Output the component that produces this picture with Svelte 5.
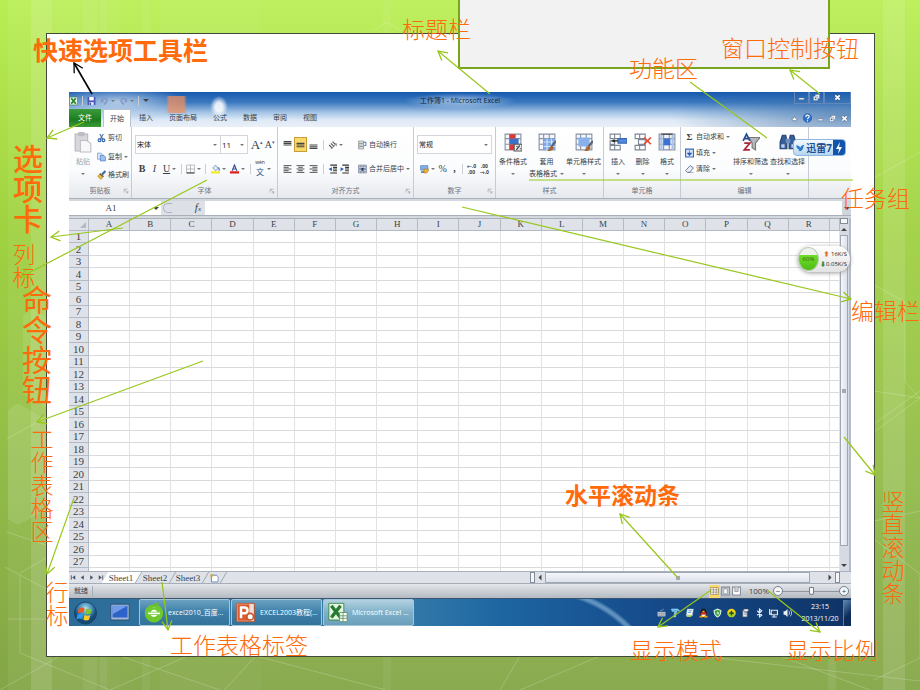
<script lang="ts">
    const columns = 'ABCDEFGHIJKLMNOPQR'.split('');
    const rows = Array.from({ length: 28 }, (_, i) => i + 1);
    const tabs = ['开始', '插入', '页面布局', '公式', '数据', '审阅', '视图'];
    const sheets = ['Sheet1', 'Sheet2', 'Sheet3'];

    let activeTab = $state('开始');
    let activeSheet = $state('Sheet1');
    let zoom = $state(50);

    // positions are on a 920 wide slide
    const labels = [
        { text: '快速选项工具栏', x: 33, y: 36, kind: 'title' },
        { text: '标题栏', x: 402, y: 16, kind: 'thin' },
        { text: '功能区', x: 629, y: 55, kind: 'thin' },
        { text: '窗口控制按钮', x: 721, y: 35, kind: 'thin' },
        { text: '任务组', x: 841, y: 185, kind: 'thin' },
        { text: '编辑栏', x: 851, y: 298, kind: 'thin' },
        { text: '水平滚动条', x: 565, y: 482, kind: 'bold' },
        { text: '工作表格标签', x: 170, y: 632, kind: 'thin' },
        { text: '显示模式', x: 630, y: 637, kind: 'thin' },
        { text: '显示比例', x: 786, y: 637, kind: 'thin' },
        { text: '选项卡', x: 13, y: 144, kind: 'tall heavy' },
        { text: '列标', x: 12, y: 243, kind: 'tall thin' },
        { text: '命令按钮', x: 22, y: 285, kind: 'tall large' },
        { text: '工作表格区', x: 30, y: 428, kind: 'tall thin' },
        { text: '行标', x: 45, y: 581, kind: 'tall thin' },
        { text: '竖直滚动条', x: 881, y: 490, kind: 'tall thin' }
    ];

    const arrows = [
        [490, 94, 438, 51],
        [820, 94, 790, 70],
        [84, 122, 47, 138],
        [123, 228, 51, 237],
        [207, 180, 21, 277],
        [462, 207, 851, 299],
        [203, 361, 37, 422],
        [74, 498, 47, 574],
        [162, 582, 168, 630],
        [677, 577, 620, 514],
        [711, 590, 658, 627],
        [767, 590, 820, 632],
        [844, 437, 875, 475]
    ];

    const gridLines = '<path d="M1 1h14v14H1zM1 5h14M1 10h14M5 1v14M10 1v14" fill="#f4f7fb" stroke="#8a93a3"/>';
    const brush = '<path d="M16 7l-4 5" stroke="#5b6675" stroke-width="2"/><path d="M12 11l2 2c-1 3-4 3-6 3 2-1 2-4 4-5z" fill="#a9652b"/>';

    const icons: Record<string, string> = {
        excel: '<path d="M1 1h14v14H1z" fill="#e9f5e8" stroke="#2d8638"/><path d="M4 3l8 10M12 3L4 13" stroke="#23802e" stroke-width="3"/>',
        save: '<path d="M1 1h14v14H1z" fill="#4a55b5"/><path d="M4 1h8v6H4z" fill="#fff"/><path d="M4 10h8v5H4z" fill="#dfe4fa"/><path d="M5 11h2v4H5z" fill="#313b8f"/>',
        undo: '<path d="M3 7c2-6 11-4 9 2-1 3-3 4-5 5" fill="none" stroke="#8299c4" stroke-width="3"/><path d="M1 4l1 7 6-2z" fill="#8299c4"/>',
        redo: '<path d="M13 7C11 1 2 3 4 9c1 3 3 4 5 5" fill="none" stroke="#8299c4" stroke-width="3"/><path d="M15 4l-1 7-6-2z" fill="#8299c4"/>',
        min: '<path d="M2 9h12v4H2z" fill="#fff" stroke="#48618a"/>',
        restore: '<path d="M5 1h10v10H5z" fill="#fff" stroke="#48618a"/><path d="M1 5h10v10H1z" fill="#fff" stroke="#48618a"/><path d="M4 8h4v4H4z" fill="#48618a"/>',
        close: '<path d="M3 3l10 10M13 3L3 13" stroke="#3c5073" stroke-width="6"/><path d="M3 3l10 10M13 3L3 13" stroke="#fff" stroke-width="4"/>',
        up: '<path d="M2 11l6-7 6 7-3 2H5z" fill="#fff" stroke="#50617c" stroke-width="1.5"/>',
        help: '<circle cx="8" cy="8" r="7.5" fill="#2f6fc7" stroke="#1d4f99"/><path d="M5 6c0-4 6-4 6-.5 0 2-3 2-3 4.500M8 12v2" fill="none" stroke="#fff" stroke-width="2"/>',
        paste: '<path d="M1 3h12v16H1z" fill="#d8d8dc" stroke="#b5b5bb"/><path d="M4 1h6v4H4z" fill="#bcbcc2"/><path d="M6 9h6l4 3v8H6z" fill="#f7f7f9" stroke="#bdbdc4"/>',
        cut: '<path d="M5 1l5 9M11 1L6 10" stroke="#53759f" stroke-width="2"/><circle cx="4.500" cy="12" r="2.500" fill="none" stroke="#2b5fa8" stroke-width="2"/><circle cx="11.500" cy="12" r="2.500" fill="none" stroke="#2b5fa8" stroke-width="2"/>',
        copy: '<path d="M1 1h6l3 3v8H1z" fill="#dbe9fa" stroke="#4e7fc0"/><path d="M6 5h6l3 3v7H6z" fill="#9cc3f0" stroke="#3369b3"/>',
        painter: '<path d="M15 1L9 7" stroke="#3d69ab" stroke-width="4"/><path d="M6 5l6 5-5 6-6-6z" fill="#e8b838" stroke="#a67a1c"/><path d="M5 6l6 5" stroke="#555" stroke-width="2"/>',
        borders: '<path d="M1 1h14v14H1zM8 1v14M1 8h14" fill="none" stroke="#8b8f96"/><path d="M1 15h14" stroke="#444" stroke-width="2"/>',
        fill: '<path d="M3 6l5-5 5 6-5 4z" fill="#e1e8f2" stroke="#4a6080"/><path d="M13 5c2 2 2 4 1 6" stroke="#2d6fc9" stroke-width="2" fill="none"/><path d="M0 12h16v4H0z" fill="#f6ec1a"/>',
        color: '<path d="M4 11L8 1l4 10M5 8h6" stroke="#3b5593" stroke-width="2.200" fill="none"/><path d="M0 12h16v4H0z" fill="#e01d1d"/>',
        top: '<path d="M1 2h14M1 5h14M1 8h14" stroke="#444" stroke-width="2"/>',
        middle: '<path d="M1 5h14M1 8h14M1 11h14" stroke="#444" stroke-width="2"/>',
        bottom: '<path d="M1 8h14M1 11h14M1 14h14" stroke="#444" stroke-width="2"/>',
        left: '<path d="M1 2h14M1 5h9M1 8h14M1 11h9M1 14h14" stroke="#444" stroke-width="1.600"/>',
        center: '<path d="M1 2h14M4 5h8M1 8h14M4 11h8M1 14h14" stroke="#444" stroke-width="1.600"/>',
        right: '<path d="M1 2h14M6 5h9M1 8h14M6 11h9M1 14h14" stroke="#444" stroke-width="1.600"/>',
        orient: '<path d="M2 8l6 6M5 5l6 6M8 2l5 5" stroke="#555" stroke-width="2"/><path d="M5 15L15 6M15 10V6h-4" stroke="#555" fill="none"/>',
        outdent: '<path d="M4 1h12M9 5h7M9 8h7M9 11h7M4 15h12" stroke="#333" stroke-width="2"/><path d="M7 5v7L1 8z" fill="#2e62b1"/>',
        indent: '<path d="M4 1h12M9 5h7M9 8h7M9 11h7M4 15h12" stroke="#333" stroke-width="2"/><path d="M1 5v7l6-4z" fill="#2e62b1"/>',
        wrap: '<path d="M1 1h9v4H1zM1 6h9v4H1zM1 11h9v4H1z" fill="#e6e9ee" stroke="#666"/><path d="M10 3h4v6h-3" stroke="#2e62b1" stroke-width="1.500" fill="none"/>',
        merge: '<path d="M1 1h14v14H1z" fill="#cfdff5" stroke="#667"/><path d="M5 1v3M10 1v3M5 12v3M10 12v3M1 4h14M1 12h14" stroke="#667"/><path d="M2 8h4M14 8h-4" stroke="#1f57a8" stroke-width="2"/><path d="M6 6h4v5H6z" fill="#333"/>',
        money: '<path d="M1 2h13v8H1z" fill="#7fb1e8" stroke="#3c6ca8"/><path d="M7 8h8v3l-3 4H7z" fill="#e9b53c" stroke="#9a701b"/><path d="M2 12h5v3H2z" fill="#5675ad"/>',
        conditional: gridLines + '<path d="M5 1h5v4H5zM5 10h5v5H5z" fill="#d93a36"/><path d="M5 5h8v5H5z" fill="#3d70c9"/><path d="M9 10h7v6H9z" fill="#eee" stroke="#555"/><path d="M11 15l3-4M11 12h1M14 14h1" stroke="#333"/>',
        format: gridLines + '<path d="M5 5h10v10H5z" fill="#7ba7e8"/><path d="M5 8h10M5 12h10M8 5v10M12 5v10" stroke="#d5e3f8"/>' + brush,
        cellstyle: gridLines + '<path d="M3 4h10v8H3z" fill="#88b0ea"/>' + brush,
        insert: '<path d="M1 1h9v4H1zM5 1v4M1 11h9v4H1zM5 11v4M1 7h4v3H1z" fill="#fff" stroke="#7d8796"/><path d="M8 5h8v4H8z" fill="#5589dc" stroke="#3467b4"/><path d="M8 7H4M5 6L3 7l2 1" fill="none" stroke="#222"/>',
        remove: '<path d="M1 1h9v4H1zM5 1v4M1 11h9v4H1zM5 11v4M4 6h6v4H4z" fill="#fff" stroke="#7d8796"/><path d="M9 4l6 6M15 4l-6 6" stroke="#e4482e" stroke-width="1.500"/>',
        size: gridLines + '<path d="M5 5h6v6H5z" fill="#3c72d4"/><path d="M3 1v14M13 1v14" stroke="#a9c2e8" stroke-width="2"/><path d="M3 1h10" stroke="#333"/>',
        down: '<path d="M1 1h14v14H1z" fill="#d5e4f8" stroke="#3a6dbb" stroke-width="2"/><path d="M8 3v7M4 8l4 5 4-5z" fill="#235bb3" stroke="#235bb3" stroke-width="1"/>',
        eraser: '<path d="M1 11l8-9 6 4-7 8H4z" fill="#eef1f8" stroke="#586a92" stroke-width="1.500"/><path d="M5 14h10" stroke="#586a92"/>',
        sort: '<path d="M6 4h10l-4 5v6l-3-2V9z" fill="#b4b7bd" stroke="#777"/><path d="M1 7l3-6 3 6M2 5h4" fill="none" stroke="#244b94" stroke-width="1.500"/><path d="M2 9h5l-5 6h5" fill="none" stroke="#a8263a" stroke-width="1.500"/>',
        find: '<path d="M3 2h3l1 5v7H1V8zM10 2h3l2 6v6H9V7z" fill="#385e97" stroke="#213f70"/><path d="M6 5h4v4H6z" fill="#6d90c4"/><path d="M2 10h3v3H2zM11 10h3v3h-3z" fill="#b6cdf0"/>',
        launcher: '<path d="M3 12V3h9M6 6l6 6M13 8v5H8" fill="none" stroke="#8a8f97" stroke-width="1.500"/>',
        bird: '<path d="M0 3c4 0 6 2 8 4 1-4 4-4 7-5-1 2-2 3-2 5-1 5-5 8-9 6 1 0 2-1 2-2-3-1-5-4-6-8z" fill="#2b7bc8"/>',
        first: '<path d="M3 3v10" stroke="#4c5360" stroke-width="2"/><path d="M12 3v10L5 8z" fill="#4c5360"/>',
        prev: '<path d="M11 3v10L4 8z" fill="#4c5360"/>',
        next: '<path d="M5 3v10l7-5z" fill="#4c5360"/>',
        last: '<path d="M13 3v10" stroke="#4c5360" stroke-width="2"/><path d="M4 3v10l7-5z" fill="#4c5360"/>',
        newsheet: '<path d="M3 3h9l3 3v9H3z" fill="#fff" stroke="#5574ad" stroke-width="1.500"/><path d="M3 0v8M0 4h7M1 1l5 6M6 1L1 7" stroke="#e3a021"/>',
        normal: '<path d="M1 2h14v12H1zM1 6h14M1 10h14M6 2v12M11 2v12" fill="#fff" stroke="#776b45"/>',
        layout: '<path d="M1 1h14v14H1z" fill="#ccd0d6" stroke="#8b9098" stroke-width="2"/><path d="M5 4h6v9H5z" fill="#fff" stroke="#70757d"/>',
        breaks: '<path d="M1 1h14v14H1z" fill="#fff" stroke="#8b9098" stroke-width="2"/><path d="M5 1v8h6V1" fill="#ccd0d6" stroke="#70757d"/>',
        start: '<circle cx="12" cy="12" r="11.500" fill="url(#orb)" stroke="#1b4467"/><path d="M5 7c2-1 4-1 6 0l-1 5c-2-1-4-1-6 0z" fill="#ea5a24"/><path d="M12.500 7.500c2 1 4 1 6.500 0l-1.500 5c-2 1-4 1-6 0z" fill="#83c531"/><path d="M3.600 13.500c2-1 4-1 6 0l-1 5c-2-1-4-1-6 0z" fill="#2f9be8"/><path d="M11 14c2 1 4 1 6 0l-1.300 5c-2 1-4 1-6 0z" fill="#fbca25"/>',
        desktop: '<path d="M1 2h22v19H1z" fill="#9eb7d5" stroke="#24476e"/><path d="M3 4h18v14H3z" fill="#2c62c9"/><path d="M3 4h18L3 14z" fill="#729be7"/>',
        browser: '<circle cx="12" cy="13" r="9" fill="#fff" stroke="#6cc82c" stroke-width="4"/><path d="M12 6a7 7 0 0 1 7 6H5a7 7 0 0 1 7-6zM5 14h14a7 7 0 0 1-14 0z" fill="#6cc82c"/><path d="M8 11c2-3 6-3 8 0zM8 15h8c-2 3-6 3-8 0z" fill="#fff"/><path d="M10 4c2-4 6-4 8-3-1 3-4 4-8 3z" fill="#69bd2b"/>',
        ppt: '<path d="M1 1h21v22H1z" fill="#f1ddd2" stroke="#b9441b"/><path d="M2 2h14v20H2z" fill="#dc5a2b"/><path d="M6 19V6h4c5 0 5 7 0 7H6" fill="none" stroke="#fff" stroke-width="3"/><circle cx="17" cy="17" r="4" fill="#fff" stroke="#c7542a" stroke-width="2"/>',
        sheet: '<path d="M1 1h18v20H1z" fill="#e6f4e2" stroke="#2e8238"/><path d="M4 4l11 14M15 4L4 18" stroke="#267b31" stroke-width="4"/><path d="M14 12h9v11h-9zM14 16h9M14 19h9M18 12v11" fill="#fff" stroke="#54925b"/>',
        keyboard: '<path d="M1 6h14v8H1z" fill="#c6cbd2"/><path d="M2 9h12M2 12h12M4 6v8M8 6v8M12 6v8" stroke="#8d949e"/><path d="M6 5c0-3 4-1 6-4" stroke="#c6cbd2" fill="none"/>',
        bars: '<path d="M1 1h11l3 3h-5l-2 11H5L7 5H2z" fill="#42b9ef" stroke="#d9f2ff"/>',
        notes: '<path d="M4 1h11l-2 12H2z" fill="#f6fafd" stroke="#86a7ba"/><path d="M6 4h6M5 7h6" stroke="#4b8fc5" stroke-width="1.500"/><path d="M3 11h8v4H3z" fill="#b5d16c"/>',
        penguin: '<ellipse cx="8" cy="9" rx="6" ry="6.500" fill="#17181a"/><circle cx="8" cy="4" r="4" fill="#17181a"/><ellipse cx="8" cy="11" rx="4" ry="4" fill="#fff"/><path d="M3 7h10v4H3z" fill="#dc2a20"/><path d="M6 4h4v2H6zM1 13h6v3H1zM9 13h6v3H9z" fill="#f3a61c"/>',
        shield: '<path d="M8 0l7 3c0 7-2 10-7 13C3 13 1 10 1 3z" fill="#e5f6e1"/><path d="M8 2l5 2c0 5-1 7-5 10-4-3-5-5-5-10z" fill="#3fa048"/><path d="M9 4L6 9h3l-1 4 3-6H8z" fill="#fff"/>',
        plus: '<circle cx="8" cy="8" r="7.500" fill="#f4d619"/><path d="M1 10c4-4 9-3 14 0-2 7-12 7-14 0z" fill="#9ccc2e"/><path d="M8 4v8M4 8h8" stroke="#174e25" stroke-width="2.500"/>',
        usb: '<path d="M3 3h8v12H3z" fill="#e3e6ea" stroke="#4a5460"/><path d="M5 1h8v4H5zM6 7h5M6 10h4" fill="#fff" stroke="#4a5460"/>',
        bluetooth: '<path d="M4 4l8 8-4 3V1l4 3-8 8" fill="none" stroke="#e6f0fa" stroke-width="2"/>',
        network: '<path d="M4 3h11v8H4z" fill="#25466e" stroke="#e1e8f0" stroke-width="2"/><path d="M1 1v9h4M9 11v3M5 15h9" fill="none" stroke="#e1e8f0" stroke-width="2"/>',
        sound: '<path d="M1 5h3l4-4v14l-4-4H1z" fill="#eef3f8"/><path d="M10 4c2 2 2 6 0 8M13 2c3 4 3 8 0 12" fill="none" stroke="#cfdbe8" stroke-width="1.500"/>'
    };

    const movers = [
        { name: 'first', label: '第一张' },
        { name: 'prev', label: '上一张' },
        { name: 'next', label: '下一张' },
        { name: 'last', label: '最后一张' }
    ];
    const tray = ['keyboard', 'bars', 'notes', 'penguin', 'shield', 'plus', 'usb', 'bluetooth', 'network', 'sound'];
</script>

{#snippet icon(name: string, size = 'sm', box = '0 0 16 16')}
    <svg class={size} viewBox={box} aria-hidden="true">{@html icons[name]}</svg>
{/snippet}

{#snippet big(name: string, text: string, second = '')}
    <button class="big">
        {@render icon(name, 'lg')}
        <span>{text}</span>
        <span class="second">{second}<i class="caret"></i></span>
    </button>
{/snippet}

{#snippet tool(name: string, label: string, caret = false)}
    <button class="tool" aria-label={label}>
        {@render icon(name)}
        {#if caret}<i class="caret"></i>{/if}
    </button>
{/snippet}

<div class="slide">
    <svg class="backdrop" viewBox="0 0 920 690" preserveAspectRatio="none" aria-hidden="true">
        <g fill="#fff">
            <path d="M8 0h912v690H8z" opacity=".06" />
            <path d="M31 0h21v690H31z" opacity=".13" />
            <path d="M52 0h68v690H52zM160 0h101v690H160z" opacity=".03" />
            <path d="M83 0h14v690H83zM100 0h7v690h-7zM142 0h8v690h-8zM383 0h8v690h-8z" opacity=".06" />
            <path d="M883 0h22v690h-22z" opacity=".12" />
            <path d="M828 656h8v34h-8z" opacity=".08" />
            <path d="M8 410l10-7 28 17v90l-28 15-10-6zM23 315l10-6 13 8v90l-23-13z" opacity=".1" />
        </g>
        <g fill="none" stroke="#fff" stroke-opacity=".2">
            <path d="M7 439l39-22M7 532l39 13M5 567l41 22M20 575v78l90 37 80-35M20 573l26-15M8 619h38" />
            <path d="M120 656l100 34M224 690l32-34 130 34M700 656l220 25M520 656l-20 34M600 656l-80 34M780 656l90 34M0 690l60-34" />
            <path d="M874 178l46-26M874 285l31 17v80l15 16-46-7M874 432l46-34M874 521l46-10M874 539l46 35v84l-46 22M874 424l46-33" />
            <path d="M374 30l13-8 13 8" />
        </g>
    </svg>

    <div class="callout"></div>

    <div class="card">
        <div class="excel">
            <header>
                <div class="titlebar">
                    <div class="quick">
                        {@render icon('excel')}
                        <span class="bar"></span>
                        <button aria-label="保存">{@render icon('save')}</button>
                        <button class="tool" aria-label="撤销">{@render icon('undo')}<i class="caret"></i></button>
                        <button class="tool" aria-label="恢复">{@render icon('redo')}<i class="caret"></i></button>
                        <span class="bar"></span>
                        <button aria-label="自定义"><i class="caret dark"></i></button>
                    </div>
                    <h1>工作簿1 - Microsoft Excel</h1>
                    <div class="window">
                        <button aria-label="最小化">{@render icon('min', 'xs')}</button>
                        <button aria-label="还原">{@render icon('restore', 'xs')}</button>
                        <button class="wide" aria-label="关闭">{@render icon('close', 'xs')}</button>
                    </div>
                </div>
                <nav>
                    <button class="file">文件</button>
                    {#each tabs as tab}
                        <button class="tab" class:active={tab === activeTab} onclick={() => (activeTab = tab)}>{tab}</button>
                    {/each}
                    <div class="inner">
                        <button aria-label="折叠">{@render icon('up', 'xs')}</button>
                        <button aria-label="帮助">{@render icon('help')}</button>
                        <button aria-label="最小化">{@render icon('min', 'xs')}</button>
                        <button aria-label="还原">{@render icon('restore', 'xs')}</button>
                        <button aria-label="关闭">{@render icon('close', 'xs')}</button>
                    </div>
                </nav>
            </header>

            <div class="ribbon">
                <section>
                    <div class="body clipboard">
                        <button class="big faded">
                            {@render icon('paste', 'lg', '0 0 17 21')}
                            <span>粘贴</span>
                            <span class="second"><i class="caret"></i></span>
                        </button>
                        <div class="stack">
                            <button class="tool">{@render icon('cut')}剪切</button>
                            <button class="tool">{@render icon('copy')}复制<i class="caret"></i></button>
                            <button class="tool">{@render icon('painter')}格式刷</button>
                        </div>
                    </div>
                    <footer>剪贴板{@render icon('launcher', 'corner')}</footer>
                </section>

                <section>
                    <div class="body lines">
                        <div class="line">
                            <span class="combo font">
                                <select aria-label="字体"><option>宋体</option></select><i class="caret"></i>
                            </span>
                            <span class="combo number">
                                <select aria-label="字号"><option>11</option></select><i class="caret"></i>
                            </span>
                            <button class="letter grow">A<sup>▴</sup></button>
                            <button class="letter">A<sup>▾</sup></button>
                        </div>
                        <div class="line spread">
                            <button class="letter"><b>B</b></button>
                            <button class="letter"><em>I</em></button>
                            <button class="letter tool"><u>U</u><i class="caret"></i></button>
                            <span class="bar"></span>
                            {@render tool('borders', '边框', true)}
                            <span class="bar"></span>
                            {@render tool('fill', '填充颜色', true)}
                            {@render tool('color', '字体颜色', true)}
                            <span class="bar"></span>
                            <button class="tool"><span class="ruby"><small>wén</small><span>文</span></span><i class="caret"></i></button>
                        </div>
                    </div>
                    <footer>字体{@render icon('launcher', 'corner')}</footer>
                </section>

                <section>
                    <div class="body lines">
                        <div class="line">
                            <button class="cell" aria-label="顶端对齐">{@render icon('top')}</button>
                            <button class="cell on" aria-label="垂直居中">{@render icon('middle')}</button>
                            <button class="cell" aria-label="底端对齐">{@render icon('bottom')}</button>
                            <span class="bar"></span>
                            <span class="pair">{@render tool('orient', '方向', true)}</span>
                            <button class="tool">{@render icon('wrap')}自动换行</button>
                        </div>
                        <div class="line">
                            <button class="cell" aria-label="左对齐">{@render icon('left')}</button>
                            <button class="cell" aria-label="居中">{@render icon('center')}</button>
                            <button class="cell" aria-label="右对齐">{@render icon('right')}</button>
                            <span class="bar"></span>
                            <span class="pair">{@render tool('outdent', '减少缩进')}{@render tool('indent', '增加缩进')}</span>
                            <button class="tool">{@render icon('merge')}合并后居中<i class="caret"></i></button>
                        </div>
                    </div>
                    <footer>对齐方式{@render icon('launcher', 'corner')}</footer>
                </section>

                <section>
                    <div class="body lines">
                        <div class="line">
                            <span class="combo">
                                <select aria-label="数字格式"><option>常规</option></select><i class="caret"></i>
                            </span>
                        </div>
                        <div class="line spread">
                            {@render tool('money', '会计格式', true)}
                            <button class="letter">%</button>
                            <button class="letter"><b>,</b></button>
                            <span class="bar"></span>
                            <button class="decimals"><span>←.0</span><span>.00</span></button>
                            <button class="decimals"><span>.00</span><span>→.0</span></button>
                        </div>
                    </div>
                    <footer>数字{@render icon('launcher', 'corner')}</footer>
                </section>

                <section>
                    <div class="body spaced">
                        {@render big('conditional', '条件格式')}
                        {@render big('format', '套用', '表格格式')}
                        {@render big('cellstyle', '单元格样式')}
                    </div>
                    <footer>样式</footer>
                </section>

                <section>
                    <div class="body spaced">
                        {@render big('insert', '插入')}
                        {@render big('remove', '删除')}
                        {@render big('size', '格式')}
                    </div>
                    <footer>单元格</footer>
                </section>

                <section>
                    <div class="body editing">
                        <div class="stack">
                            <button class="tool"><b class="sigma">Σ</b>自动求和<i class="caret"></i></button>
                            <button class="tool">{@render icon('down')}填充<i class="caret"></i></button>
                            <button class="tool">{@render icon('eraser')}清除<i class="caret"></i></button>
                        </div>
                        {@render big('sort', '排序和筛选')}
                        {@render big('find', '查找和选择')}
                    </div>
                    <footer>编辑</footer>
                </section>

                <button class="thunder">
                    {@render icon('bird')}
                    <span>迅雷7</span>
                    <svg viewBox="0 0 12 18" aria-hidden="true"><path d="M7 3L3 10h3l-1 5 4-7H6z" fill="#fff" /></svg>
                </button>
            </div>

            <div class="formula">
                <label class="namebox"><input aria-label="名称框" value="A1" /><i class="caret dark"></i></label>
                <span class="fx"><span class="round"></span><em>f<small>x</small></em></span>
                <input class="entry" aria-label="编辑栏" />
                <button class="expand" aria-label="展开"><i class="caret dark"></i></button>
            </div>

            <div class="workspace">
                <div class="cells">
                    <table>
                        <colgroup>
                            <col class="head" />
                            {#each columns as c}<col />{/each}
                            <col class="rest" />
                        </colgroup>
                        <thead>
                            <tr>
                                <th><i class="all"></i></th>
                                {#each columns as c}<th>{c}</th>{/each}
                                <th></th>
                            </tr>
                        </thead>
                        <tbody>
                            {#each rows as r}
                                <tr>
                                    <th>{r < 28 ? r : ''}</th>
                                    {#each columns as c}<td></td>{/each}
                                    <td></td>
                                </tr>
                            {/each}
                        </tbody>
                    </table>
                </div>
                <div class="vscroll">
                    <span class="split"></span>
                    <button aria-label="向上"><i class="caret dark flip"></i></button>
                    <div class="thumb"><span></span></div>
                    <button aria-label="向下"><i class="caret dark"></i></button>
                </div>
                <div class="speed">
                    <span class="ball">60%</span>
                    <span class="rates">
                        <span><b class="upload">⬆</b> 16K/S</span>
                        <span><b class="download">⬇</b>0.05K/S</span>
                    </span>
                </div>
            </div>

            <div class="sheetbar">
                <div class="movers">
                    {#each movers as mover}
                        <button aria-label={mover.label}>{@render icon(mover.name, 'xs')}</button>
                    {/each}
                </div>
                {#each sheets as sheet}
                    <button class="sheet" class:active={sheet === activeSheet} onclick={() => (activeSheet = sheet)}><span>{sheet}</span></button>
                {/each}
                <button class="sheet" aria-label="插入工作表"><span>{@render icon('newsheet')}</span></button>
                <div class="hscroll">
                    <span class="split"></span>
                    <button aria-label="向左"><i class="caret dark ccw"></i></button>
                    <div class="thumb"><span></span></div>
                    <button aria-label="向右"><i class="caret dark cw"></i></button>
                    <span class="split"></span>
                </div>
            </div>

            <div class="status">
                <span class="ready">就绪</span>
                <div class="views">
                    <button class="on" aria-label="普通">{@render icon('normal')}</button>
                    <button aria-label="页面布局">{@render icon('layout')}</button>
                    <button aria-label="分页预览">{@render icon('breaks')}</button>
                </div>
                <span class="percent">100%</span>
                <button class="knob" aria-label="缩小">−</button>
                <input type="range" aria-label="显示比例" bind:value={zoom} />
                <button class="knob" aria-label="放大">+</button>
            </div>

            <div class="taskbar">
                <svg class="defs" aria-hidden="true">
                    <radialGradient id="orb" cy="30%">
                        <stop offset="0" stop-color="#b8e2f2" />
                        <stop offset=".6" stop-color="#3f8ab5" />
                        <stop offset="1" stop-color="#174a78" />
                    </radialGradient>
                </svg>
                <button class="start" aria-label="开始">{@render icon('start', 'orb', '0 0 24 24')}</button>
                <button class="start" aria-label="桌面">{@render icon('desktop', 'app', '0 0 24 24')}</button>
                <button class="task">{@render icon('browser', 'app', '0 0 24 24')}excel2010_百度...</button>
                <button class="task">{@render icon('ppt', 'app', '0 0 24 24')}EXCEL2003教程(...</button>
                <button class="task lit">{@render icon('sheet', 'app', '0 0 24 24')}Microsoft Excel ...</button>
                <div class="tray">
                    {#each tray as name}{@render icon(name)}{/each}
                </div>
                <div class="clock"><span>23:15</span><span>2013/11/20</span></div>
                <span class="peek"></span>
            </div>
        </div>
    </div>

    <svg class="arrows" viewBox="0 0 920 690" preserveAspectRatio="none" aria-hidden="true">
        <defs>
            <marker id="head" viewBox="0 0 12 12" refX="11" refY="6" markerWidth="12" markerHeight="12" markerUnits="userSpaceOnUse" orient="auto">
                <path d="M2 1l9 5-9 5" fill="none" stroke="context-stroke" stroke-width="1.300" />
            </marker>
        </defs>
        <g stroke="#98c71b" stroke-width="1.200">
            {#each arrows as [x1, y1, x2, y2]}
                <line {x1} {y1} {x2} {y2} marker-end="url(#head)" />
            {/each}
            <path d="M690 82l77 56M529 180h324" />
        </g>
        <line x1="92" y1="94" x2="74" y2="63" stroke="#000" stroke-width="1.600" marker-end="url(#head)" />
    </svg>

    {#each labels as label}
        <span class="label {label.kind}" style="left: {(label.x / 920) * 100}%; top: {label.y}px">{label.text}</span>
    {/each}
</div>

<style>
    :global(body) {
        margin: 0;
    }

    .slide {
        position: relative;
        min-height: 100vh;
        box-sizing: border-box;
        padding: 33px 45px 33px 46px;
        overflow: hidden;
        background: linear-gradient(#b9ee54, #a0d240 33%, #92bd48 66%, #83a546);
        font-family: "Open Sans", "Noto Sans CJK SC", sans-serif;
    }

    .backdrop,
    .arrows {
        position: absolute;
        left: 0;
        top: 0;
        width: 100%;
        height: 690px;
        pointer-events: none;
    }

    .callout {
        position: absolute;
        z-index: 1;
        top: 0;
        left: 50%;
        right: 90px;
        height: 67px;
        margin-left: -2px;
        background: #f2f2f2;
        border: 2px solid #79a51c;
        border-top: 0;
    }

    .card {
        position: relative;
        box-sizing: border-box;
        background: #fff;
        border: 1px solid #43483a;
        padding: 58px 23px 30px 22px;
    }

    .label {
        position: absolute;
        z-index: 2;
        white-space: nowrap;
        color: #ff6a0a;
        font-family: "Noto Sans CJK SC", sans-serif;
        font-size: 23px;
        line-height: 24px;
    }

    .thin {
        font-weight: 300;
    }

    .bold {
        font-weight: 700;
    }

    .title {
        font-size: 25px;
        line-height: 26px;
        font-weight: 700;
    }

    .tall {
        writing-mode: vertical-rl;
    }

    .heavy,
    .large {
        font-size: 30px;
        line-height: 30px;
    }

    .heavy {
        font-weight: 500;
    }

    .arrows {
        z-index: 2;
    }

    button,
    select,
    input {
        font: inherit;
        color: inherit;
        margin: 0;
        padding: 0;
        border: 0;
        border-radius: 0;
        background: none;
        outline: none;
    }

    button {
        display: flex;
        align-items: center;
        justify-content: center;
        white-space: nowrap;
    }

    .excel {
        font-size: 7px;
        line-height: 10px;
        color: #3a3f47;
        background: #d3d8df;
    }

    svg {
        flex: none;
    }

    .xs { width: 7px; height: 7px; }
    .sm { width: 9px; height: 10px; }
    .lg { width: 18px; height: 22px; }
    .app { width: 20px; height: 21px; }
    .orb { width: 23px; height: 24px; }

    .caret {
        flex: none;
        border: 2px solid transparent;
        border-top-color: #777;
        border-bottom: 0;
    }

    .caret.dark {
        border-width: 3px 3px 0;
        border-top-color: #444;
    }

    .flip { transform: rotate(180deg); }
    .cw { transform: rotate(-90deg); }
    .ccw { transform: rotate(90deg); }

    .bar {
        width: 1px;
        height: 10px;
        background: #c9ced6;
    }

    header {
        background:
            linear-gradient(90deg, transparent, #f08d5abb 15%, #f08d5abb 85%, transparent) 97px 4px / 21px 17px no-repeat,
            radial-gradient(ellipse 9px 11px at 150px 15px, #ffffffdd 40%, transparent),
            radial-gradient(ellipse 56px 8px at 50% 9px, #ffffff88, transparent),
            radial-gradient(ellipse 70px 16px at 48px 10px, #ffffff99, transparent),
            radial-gradient(ellipse 180px 34px at 100% 24px, #376ba6aa, transparent),
            linear-gradient(#1558ae, #3c7ac0 30%, #a3c3e5 58%, #dfeaf6 80%, #e9eff7);
    }

    .titlebar,
    nav {
        display: flex;
        align-items: center;
    }

    .titlebar {
        height: 17px;
        justify-content: space-between;
    }

    .quick {
        display: flex;
        align-items: center;
        gap: 4px;
        flex: 1;
    }

    h1 {
        margin: 0;
        font-size: 7px;
        font-weight: 400;
        color: #111c2c;
    }

    .window {
        flex: 1;
        display: flex;
        justify-content: flex-end;
        align-self: flex-start;
    }

    .window button {
        width: 15px;
        height: 12px;
        border: 1px solid #6387b8;
        border-top: 0;
    }

    .window .wide {
        width: 27px;
    }

    nav {
        height: 18px;
    }

    nav .file {
        align-self: stretch;
        width: 32px;
        margin-right: 2px;
        color: #fff;
        background: linear-gradient(#3c9c3c, #1c7d20 60%, #3d9a35);
    }

    .tab {
        align-self: stretch;
        padding: 0 6px;
        margin-right: 4px;
    }

    .tab.active {
        margin-right: 2px;
        background: #fff;
        border: 1px solid #b9c4d2;
        border-bottom: 0;
    }

    .inner {
        margin-left: auto;
        padding-right: 3px;
        display: flex;
        gap: 5px;
    }

    .ribbon {
        position: relative;
        display: grid;
        grid-template-columns: 63fr 146fr 136fr 82fr 108fr 77fr 128fr 42fr;
        height: 71px;
        background: linear-gradient(#fff, #fbfcfd 60%, #e6e9ee);
        border-bottom: 1px solid #a9b0ba;
    }

    section {
        display: flex;
        flex-direction: column;
        min-width: 0;
        border-right: 1px solid #c6ccd5;
    }

    .body {
        flex: 1;
        display: flex;
        padding: 4px 3px 0;
    }

    section footer {
        position: relative;
        text-align: center;
        height: 14px;
        line-height: 14px;
        color: #6c727c;
    }

    .corner {
        position: absolute;
        right: 2px;
        top: 4px;
        width: 6px;
        height: 6px;
    }

    .tool {
        gap: 2px;
    }

    .big {
        flex-direction: column;
        justify-content: flex-start;
        flex: none;
        line-height: 12px;
    }

    .big .lg {
        margin-bottom: 3px;
    }

    .second {
        display: flex;
        align-items: center;
        gap: 3px;
        height: 12px;
    }

    .faded {
        color: #a3a6ab;
        width: 22px;
    }

    .clipboard {
        gap: 3px;
    }

    .stack {
        display: flex;
        flex-direction: column;
        align-items: flex-start;
        justify-content: space-between;
        padding: 2px 0 4px;
    }

    .lines {
        flex-direction: column;
        padding: 8px 3px 0;
        gap: 5px;
    }

    .line {
        display: flex;
        align-items: center;
        height: 19px;
    }

    .spread {
        justify-content: space-between;
        padding: 0 3px;
    }

    .combo {
        display: flex;
        align-items: center;
        box-sizing: border-box;
        flex: 1;
        height: 19px;
        padding: 0 3px 0 1px;
        background: #fff;
        border: 1px solid #d3d7dd;
    }

    .combo.font {
        flex: 0 0 86px;
    }

    .combo.number {
        flex: 0 0 27px;
        border-left: 0;
        font-size: 8px;
    }

    select {
        appearance: none;
        flex: 1;
        min-width: 0;
        color: #222;
    }

    .letter {
        font-family: "Liberation Serif", serif;
        font-size: 10px;
        min-width: 8px;
    }

    .letter sup {
        font-size: 5px;
        line-height: 5px;
        align-self: flex-start;
        color: #3866ae;
    }

    .grow {
        font-size: 13px;
        padding: 0 4px;
    }

    .ruby {
        display: flex;
        flex-direction: column;
        align-items: center;
        font-size: 8px;
        line-height: 12px;
        color: #2c5390;
    }

    .ruby small {
        font-size: 5px;
        line-height: 7px;
        color: #333;
    }

    .cell {
        box-sizing: border-box;
        width: 13px;
        height: 15px;
    }

    .cell.on {
        background: #fbd968;
        border: 1px solid #c79d36;
    }

    .cell + .bar {
        margin: 0 4px 0 3px;
    }

    .pair {
        display: flex;
        gap: 3px;
        width: 30px;
    }

    .decimals {
        flex-direction: column;
        font-size: 5px;
        line-height: 6px;
        font-weight: 700;
    }

    .spaced {
        justify-content: space-between;
        padding-right: 2px;
    }

    .spaced .big {
        min-width: 22px;
    }

    .editing {
        gap: 2px;
        padding: 3px 2px 0 4px;
    }

    .editing .stack {
        width: 46px;
        padding-bottom: 10px;
    }

    .editing .big {
        padding-top: 1px;
    }

    .sigma {
        width: 9px;
        font-size: 9px;
        font-family: "Liberation Serif", serif;
    }

    .thunder {
        position: absolute;
        right: 5px;
        top: 12px;
        height: 17px;
        padding-left: 2px;
        gap: 1px;
        overflow: hidden;
        font-size: 10px;
        font-weight: 700;
        color: #1e4f91;
        background: linear-gradient(#f5fbff, #b4d6f2);
        border: 1px solid #8eb6de;
        border-radius: 4px;
    }

    .thunder > svg:last-child {
        width: 12px;
        height: 18px;
        background: #1253ac;
    }

    .formula {
        display: flex;
        height: 14px;
        margin: 2px 0;
        background: #fff;
        border-bottom: 1px solid #a9b0ba;
    }

    .namebox {
        display: flex;
        align-items: center;
        width: 90px;
        padding-right: 2px;
        font-family: "Liberation Serif", serif;
        font-size: 9px;
    }

    .namebox input {
        flex: 1;
        min-width: 0;
        text-align: center;
    }

    .fx {
        display: flex;
        align-items: center;
        justify-content: space-between;
        box-sizing: border-box;
        width: 44px;
        padding: 0 4px 0 2px;
        background: #dde1e7;
        font-family: "Liberation Serif", serif;
        font-size: 11px;
    }

    .fx small {
        font-size: 7px;
    }

    .round {
        width: 8px;
        height: 8px;
        border: 1px solid #adb4be;
        border-right: 0;
        border-radius: 6px 0 0 6px;
    }

    .entry {
        flex: 1;
        min-width: 0;
    }

    .expand {
        width: 9px;
        background: #cfd5dd;
    }

    .workspace {
        position: relative;
        display: flex;
        height: 353px;
    }

    .cells {
        flex: 1;
        overflow: hidden;
        background: #fff;
        border-top: 1px solid #a9b0ba;
        box-sizing: border-box;
    }

    table {
        width: 100%;
        table-layout: fixed;
        border-collapse: separate;
        border-spacing: 0;
        font-family: "Liberation Serif", serif;
    }

    col.head { width: 20px; }
    col.rest { width: 10px; }

    th,
    td {
        box-sizing: border-box;
        height: 12px;
        padding: 0;
        border-right: 1px solid #e3e3e6;
        border-bottom: 1px solid #d9dadd;
        line-height: 9px;
    }

    th {
        font-weight: 400;
        background: #dfe3e9;
        border-color: #b3bac4;
    }

    thead th {
        font-size: 9px;
    }

    tbody th {
        font-size: 11px;
    }

    tbody tr:nth-child(even) th {
        height: 13px;
    }

    .all {
        display: block;
        margin: 2px 3px 1px 11px;
        border: 3px solid #b3bac4;
        border-top-color: transparent;
        border-left-color: transparent;
        width: 0;
    }

    .vscroll {
        display: flex;
        flex-direction: column;
        box-sizing: border-box;
        width: 11px;
        padding-right: 1px;
        background: #d6dbe3;
        border-right: 2px solid #b4bbc6;
    }

    .vscroll button {
        height: 11px;
    }

    .split {
        box-sizing: border-box;
        flex: none;
        height: 6px;
        background: #f4f6f9;
        border: 1px solid #838b97;
    }

    .thumb {
        flex: 1;
        display: flex;
        align-items: center;
        justify-content: center;
        background: linear-gradient(90deg, #f4f6fa, #dde2ec);
        border: 1px solid #a0a7b4;
    }

    .vscroll .thumb {
        margin-bottom: 14px;
    }

    .thumb span {
        width: 4px;
        height: 4px;
        background: #a4aab4;
    }

    .speed {
        position: absolute;
        right: 1px;
        top: 28px;
        display: flex;
        align-items: center;
        height: 26px;
        padding-right: 3px;
        gap: 1px;
        background: linear-gradient(#fff, #e3e3e3);
        border-radius: 13px;
        box-shadow: 0 1px 4px #999;
        font-size: 6px;
        color: #222;
    }

    .ball {
        width: 19px;
        height: 22px;
        border-radius: 50%;
        line-height: 22px;
        text-align: center;
        color: #35611a;
        background: linear-gradient(#eef2ea 30%, #6fdc28 34%, #4fbc16);
        border: 1px solid #b7c9ad;
    }

    .rates {
        display: flex;
        flex-direction: column;
        text-align: right;
    }

    .upload { color: #e4702a; }
    .download { color: #3a8f3a; }

    .sheetbar {
        display: flex;
        align-items: stretch;
        height: 12px;
        box-sizing: border-box;
        border-top: 1px solid #a9b0ba;
        background: #dfe3e9;
    }

    .movers {
        display: flex;
        align-items: center;
        justify-content: space-around;
        width: 36px;
    }

    .sheet {
        padding: 0 4px;
        font-family: "Liberation Serif", serif;
        font-size: 9px;
        border-right: 1px solid #9fa6b1;
        transform: skewX(-30deg);
    }

    .sheet span {
        display: flex;
        transform: skewX(30deg);
    }

    .sheet.active {
        background: #fff;
    }

    .hscroll {
        display: flex;
        width: 310px;
        margin-left: auto;
        padding-right: 11px;
    }

    .hscroll button {
        width: 10px;
    }

    .hscroll .split {
        width: 5px;
        height: 11px;
    }

    .hscroll .thumb {
        margin-right: 15px;
        background: linear-gradient(#f4f6fa, #dde2ec);
    }

    .status {
        display: flex;
        align-items: center;
        height: 15px;
        padding: 0 2px 0 5px;
        box-sizing: border-box;
        border-top: 1px solid #a6adb7;
        background: linear-gradient(#e4e7eb, #b5bac2);
    }

    .ready {
        width: 18px;
        border-right: 1px solid #a6adb7;
    }

    .views {
        display: flex;
        margin-left: auto;
    }

    .views button {
        width: 11px;
        height: 13px;
    }

    .views .on {
        background: #fbd968;
    }

    .percent {
        margin: 0 4px 0 7px;
        font-size: 8px;
    }

    .knob {
        box-sizing: border-box;
        width: 10px;
        height: 10px;
        font-size: 8px;
        border: 1px solid #777e88;
        border-radius: 50%;
        background: #f6f7f9;
    }

    input[type="range"] {
        appearance: none;
        width: 56px;
        height: 10px;
        background: linear-gradient(#8f96a0, #8f96a0) center / 100% 1px no-repeat;
    }

    input[type="range"]::-webkit-slider-thumb {
        appearance: none;
        width: 5px;
        height: 8px;
        background: #f6f7f9;
        border: 1px solid #777e88;
        border-radius: 1px 1px 3px 3px;
    }

    .taskbar {
        display: flex;
        align-items: center;
        height: 28px;
        box-sizing: border-box;
        border-top: 1px solid #38546f;
        color: #fff;
        background:
            radial-gradient(circle at 0 117px, transparent 122px, #8fbbdc99 125px, #8fbbdc99 127px, transparent 130px) 71% 0 / 120px 28px no-repeat,
            linear-gradient(90deg, #2c6c98, #3a80ab 40%, #1d66a2 55%, #154a8a 75%, #0f3466);
    }

    .defs {
        position: absolute;
        width: 0;
        height: 0;
    }

    .start {
        width: 32px;
        margin-right: 3px;
    }

    .task {
        flex: 0 0 91px;
        box-sizing: border-box;
        height: 27px;
        margin-right: 1px;
        justify-content: flex-start;
        gap: 4px;
        padding-left: 4px;
        overflow: hidden;
        background: linear-gradient(#6ba1c1, #3d7fa9 50%, #347299);
        border: 1px solid #a5c6d8;
        border-radius: 2px;
    }

    .task.lit {
        background: linear-gradient(#b4d2e0, #7fb0c9 50%, #6a9fbb);
    }

    .tray {
        display: flex;
        gap: 5px;
        margin-left: auto;
    }

    .clock {
        display: flex;
        flex-direction: column;
        align-items: center;
        width: 46px;
        margin-left: 5px;
        line-height: 12px;
    }

    .peek {
        width: 7px;
        height: 26px;
        border-left: 1px solid #5b80a8;
        background: linear-gradient(135deg, #5f88b0, #0d2c57 60%);
    }
</style>
